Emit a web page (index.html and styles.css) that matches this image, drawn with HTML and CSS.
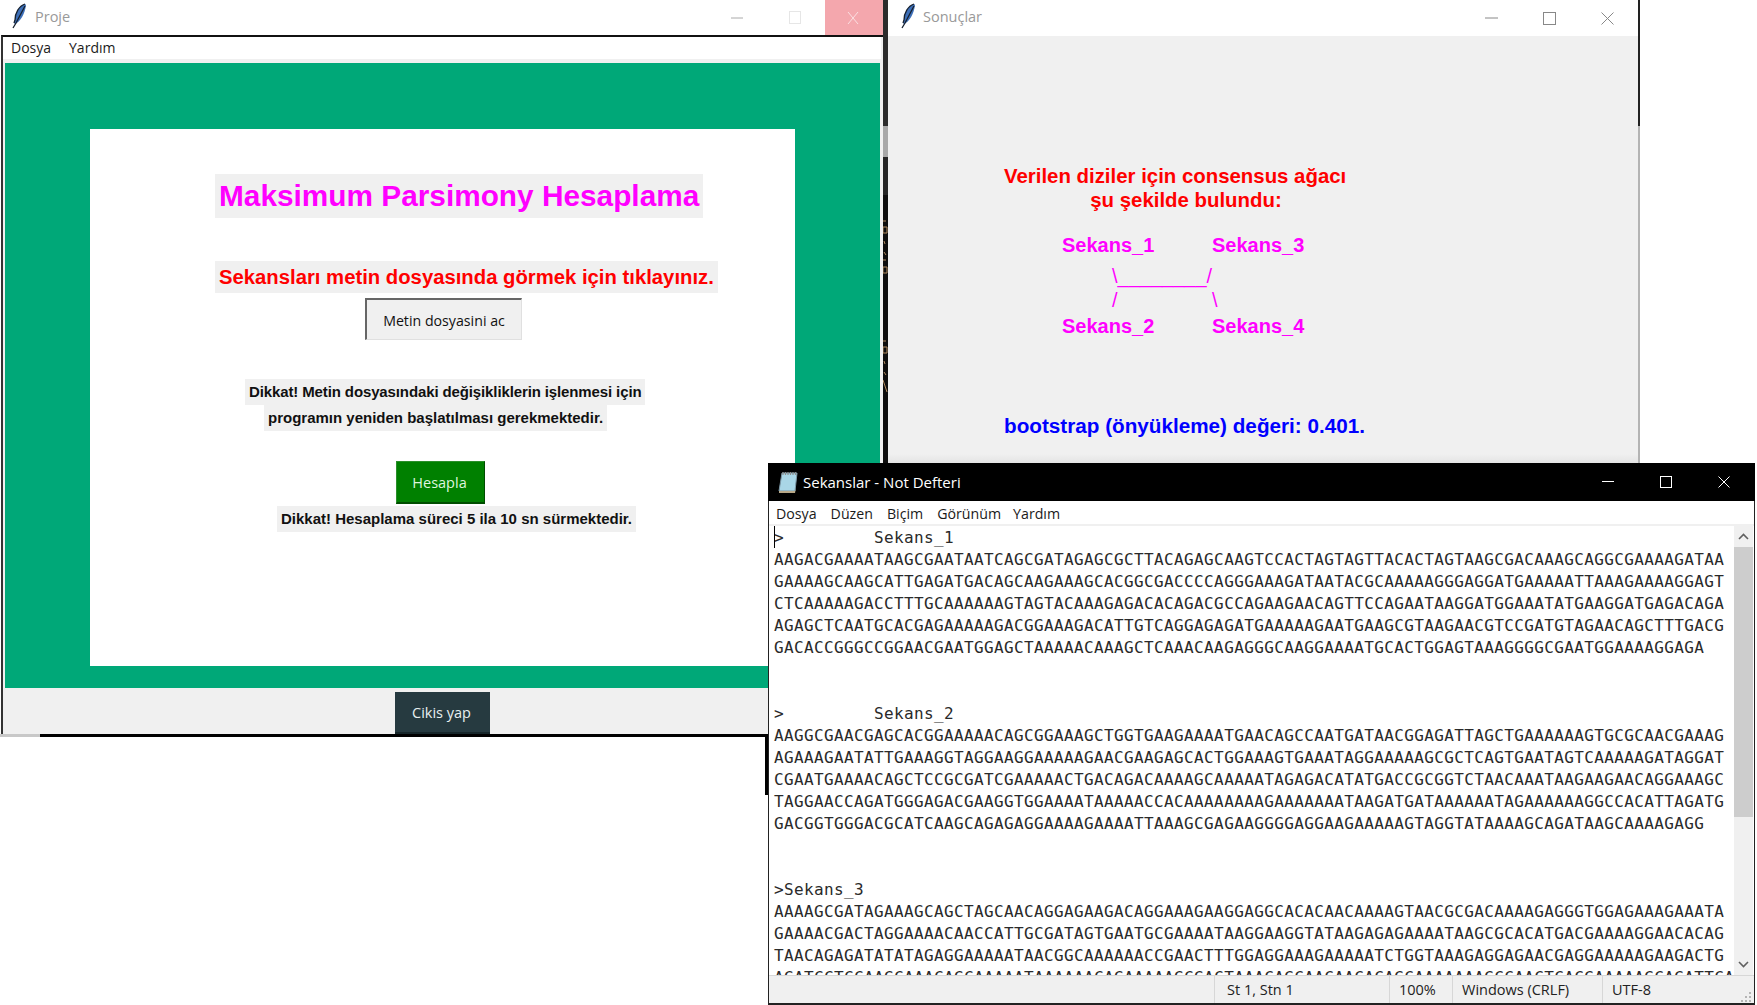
FILE: index.html
```
<!DOCTYPE html>
<html lang="tr">
<head>
<meta charset="utf-8">
<title>Proje</title>
<link rel="stylesheet" href="styles.css">
</head>
<body>
<div class="desktop">
  <div class="gutter">
    <svg class="gutter-marks" width="6" height="190" viewBox="0 0 6 190"><g fill="none" stroke="#b08a60" stroke-width="1"><path d="M1 1h3M1 7h4v6H1zM2 21l1 3M2 32l2 3M1 40h3M1 47h4v6H1z"/><path d="M1 121h3M1 127h4v6H1zM2 141l1 3M2 152l2 3M1 160l4 12"/></g></svg>
  </div>
  <div class="under-line"></div>
  <div class="under-shadow"></div>
  <div class="under-stub"></div>

  <section class="window proje">
    <header class="titlebar">
      <svg class="feather" width="22" height="26" viewBox="0 0 22 26"><path d="M16 1C10 3 6 10 6 17l-1 3 1 1c5-2 10-10 11-19z" fill="#3d6fb8"/><path d="M16 1C10 3 6 10 6 17l-1 3M16 3 7 20l-3 5" fill="none" stroke="#16202e" stroke-width="1.3"/></svg>
      <span class="win-title">Proje</span>
      <div class="caption">
        <span class="cap-btn"><svg width="12" height="12" viewBox="0 0 12 12"><path d="M0 6h12" stroke="#aaa"/></svg></span>
        <span class="cap-btn"><svg width="12" height="13" viewBox="0 0 12 13"><rect x=".5" y=".5" width="11" height="12" fill="none" stroke="#e6e6e6"/></svg></span>
        <span class="cap-btn cap-close"><svg width="12" height="12" viewBox="0 0 12 12"><path d="M1 0l10 12M11 0 1 12" stroke="#fbdfe1" fill="none"/></svg></span>
      </div>
    </header>
    <div class="client">
      <nav class="menu proje-menu"><span>Dosya</span><span>Yardım</span></nav>
      <div class="green">
        <div class="panel">
          <h1 class="lbl heading">Maksimum Parsimony Hesaplama</h1>
          <p class="lbl sub">Sekansları metin dosyasında görmek için tıklayınız.</p>
          <button class="btn open-btn">Metin dosyasini ac</button>
          <p class="lbl note note-1">Dikkat! Metin dosyasındaki değişikliklerin işlenmesi için</p>
          <p class="lbl note note-2">programın yeniden başlatılması gerekmektedir.</p>
          <button class="btn calc-btn">Hesapla</button>
          <p class="lbl note note-3">Dikkat! Hesaplama süreci 5 ila 10 sn sürmektedir.</p>
        </div>
      </div>
      <footer class="proje-foot"><button class="btn exit-btn">Cikis yap</button></footer>
    </div>
  </section>

  <section class="window sonuc">
    <header class="titlebar sonuc-title">
      <svg class="feather" width="22" height="26" viewBox="0 0 22 26"><path d="M16 1C10 3 6 10 6 17l-1 3 1 1c5-2 10-10 11-19z" fill="#3d6fb8"/><path d="M16 1C10 3 6 10 6 17l-1 3M16 3 7 20l-3 5" fill="none" stroke="#16202e" stroke-width="1.3"/></svg>
      <span class="win-title">Sonuçlar</span>
      <div class="caption">
        <span class="cap-btn"><svg width="13" height="12" viewBox="0 0 13 12"><path d="M0 6h13" stroke="#888"/></svg></span>
        <span class="cap-btn"><svg width="13" height="13" viewBox="0 0 13 13"><rect x=".5" y=".5" width="12" height="12" fill="none" stroke="#888"/></svg></span>
        <span class="cap-btn"><svg width="13" height="13" viewBox="0 0 13 13"><path d="M.5.5l12 12M12.500.5l-12 12" stroke="#888" fill="none"/></svg></span>
      </div>
    </header>
    <div class="sonuc-body">
      <p class="result-head">Verilen diziler için consensus ağacı<br><span class="result-second">şu şekilde bulundu:</span></p>
      <div class="tree">
        <div class="tree-row leaves"><span>Sekans_1</span><span>Sekans_3</span></div>
        <div class="tree-row links top-link">\________/</div>
        <div class="tree-row links bottom-link"><span>/</span><span>\</span></div>
        <div class="tree-row leaves"><span>Sekans_2</span><span>Sekans_4</span></div>
      </div>
      <p class="bootstrap">bootstrap (önyükleme) değeri: 0.401.</p>
    </div>
  </section>

  <section class="window notepad">
    <header class="np-title">
      <svg class="np-icon" width="22" height="24" viewBox="0 0 22 24"><path d="M5 3h15l-2 18H2z" fill="#a9d6e6" stroke="#7d98a6"/><path d="M2 21h16l1-3-1 5H2z" fill="#b8a888"/><path d="M6 2v3M8.500 2v3M11 2v3M13.500 2v3M16 2v3M18.500 2v3" stroke="#8d8d8d" stroke-width="1.200"/></svg>
      <span class="np-name">Sekanslar - Not Defteri</span>
      <div class="caption np-caption">
        <span class="cap-btn"><svg width="12" height="12" viewBox="0 0 12 12"><path d="M0 5.500h12" stroke="#fff"/></svg></span>
        <span class="cap-btn"><svg width="12" height="12" viewBox="0 0 12 12"><rect x=".5" y=".5" width="11" height="11" fill="none" stroke="#fff"/></svg></span>
        <span class="cap-btn"><svg width="12" height="12" viewBox="0 0 12 12"><path d="M.5.500l11 11M11.500.500l-11 11" stroke="#fff" fill="none"/></svg></span>
      </div>
    </header>
    <nav class="menu np-menu"><span>Dosya</span><span>Düzen</span><span>Biçim</span><span>Görünüm</span><span>Yardım</span></nav>
    <div class="np-edit">
      <i class="caret"></i>
      <pre class="seq">&gt;         Sekans_1
AAGACGAAAATAAGCGAATAATCAGCGATAGAGCGCTTACAGAGCAAGTCCACTAGTAGTTACACTAGTAAGCGACAAAGCAGGCGAAAAGATAA
GAAAAGCAAGCATTGAGATGACAGCAAGAAAGCACGGCGACCCCAGGGAAAGATAATACGCAAAAAGGGAGGATGAAAAATTAAAGAAAAGGAGT
CTCAAAAAGACCTTTGCAAAAAAGTAGTACAAAGAGACACAGACGCCAGAAGAACAGTTCCAGAATAAGGATGGAAATATGAAGGATGAGACAGA
AGAGCTCAATGCACGAGAAAAAGACGGAAAGACATTGTCAGGAGAGATGAAAAAGAATGAAGCGTAAGAACGTCCGATGTAGAACAGCTTTGACG
GACACCGGGCCGGAACGAATGGAGCTAAAAACAAAGCTCAAACAAGAGGGCAAGGAAAATGCACTGGAGTAAAGGGGCGAATGGAAAAGGAGA


&gt;         Sekans_2
AAGGCGAACGAGCACGGAAAAACAGCGGAAAGCTGGTGAAGAAAATGAACAGCCAATGATAACGGAGATTAGCTGAAAAAAGTGCGCAACGAAAG
AGAAAGAATATTGAAAGGTAGGAAGGAAAAAGAACGAAGAGCACTGGAAAGTGAAATAGGAAAAAGCGCTCAGTGAATAGTCAAAAAGATAGGAT
CGAATGAAAACAGCTCCGCGATCGAAAAACTGACAGACAAAAGCAAAAATAGAGACATATGACCGCGGTCTAACAAATAAGAAGAACAGGAAAGC
TAGGAACCAGATGGGAGACGAAGGTGGAAAATAAAAACCACAAAAAAAAGAAAAAAATAAGATGATAAAAAATAGAAAAAAGGCCACATTAGATG
GACGGTGGGACGCATCAAGCAGAGAGGAAAAGAAAATTAAAGCGAGAAGGGGAGGAAGAAAAAGTAGGTATAAAAGCAGATAAGCAAAAGAGG


&gt;Sekans_3
AAAAGCGATAGAAAGCAGCTAGCAACAGGAGAAGACAGGAAAGAAGGAGGCACACAACAAAAGTAACGCGACAAAAGAGGGTGGAGAAAGAAATA
GAAAACGACTAGGAAAACAACCATTGCGATAGTGAATGCGAAAATAAGGAAGGTATAAGAGAGAAAATAAGCGCACATGACGAAAAGGAACACAG
TAACAGAGATATATAGAGGAAAAATAACGGCAAAAAACCGAACTTTGGAGGAAAGAAAAATCTGGTAAAGAGGAGAACGAGGAAAAAGAAGACTG
AGATCCTCCAAGCAAACAGCAAAAATAAAAAACAGAAAAAGCGACTAAACAGCAACAACACAGCAAAAAAAGCCAACTCACGAAAAAGCAGATTCA</pre>
      <aside class="scrollbar">
        <span class="sb-arrow"><svg width="11" height="7" viewBox="0 0 11 7"><path d="M1 6l4.500-4.500L10 6" fill="none" stroke="#606060" stroke-width="1.600"/></svg></span>
        <span class="sb-thumb"></span>
        <span class="sb-track"></span>
        <span class="sb-arrow"><svg width="11" height="7" viewBox="0 0 11 7"><path d="M1 1l4.500 4.500L10 1" fill="none" stroke="#606060" stroke-width="1.600"/></svg></span>
      </aside>
    </div>
    <footer class="np-status">
      <span class="cell cell-grow"></span>
      <span class="cell cell-pos">St 1, Stn 1</span>
      <span class="cell cell-zoom">100%</span>
      <span class="cell cell-eol">Windows (CRLF)</span>
      <span class="cell cell-enc">UTF-8</span>
      <svg class="grip" width="12" height="12" viewBox="0 0 12 12"><path d="M8 2h2v2H8zM4 6h2v2H4zM8 6h2v2H8zM0 10h2v2H0zM4 10h2v2H4zM8 10h2v2H8z" fill="#b5b5b5"/></svg>
    </footer>
  </section>
</div>
</body>
</html>
```
FILE: styles.css
```
* { box-sizing: border-box; }
html, body { margin: 0; padding: 0; background: #fff; }
body { width: 1757px; height: 1005px; overflow: hidden; font-family: "Open Sans", "Noto Sans", sans-serif; }
p, h1, pre { margin: 0; }
.desktop { position: relative; width: 1757px; height: 1005px; overflow: hidden; background: #fff; }

.gutter { position: absolute; left: 882px; top: 0; width: 6px; height: 463px; background: linear-gradient(to bottom, #2c2c2c 0, #2c2c2c 126px, #a8a8a8 126px, #a8a8a8 157px, #262626 157px, #262626 195px, #0e0e0e 195px); }
.gutter-marks { position: absolute; left: 0; top: 220px; display: block; }
.under-line { position: absolute; left: 40px; top: 734px; width: 728px; height: 3px; background: #000; }
.under-shadow { position: absolute; left: 0; top: 734px; width: 40px; height: 3px; background: #c8c8c8; }
.under-stub { position: absolute; left: 765px; top: 734px; width: 3px; height: 61px; background: #000; }

.window { position: absolute; display: flex; flex-direction: column; }
.titlebar { height: 35px; flex: none; display: flex; align-items: center; background: #fff; padding-left: 9px; }
.feather { display: block; flex: none; margin-top: -4px; }
.win-title { margin: -2px 0 0 4px; font-size: 14.5px; color: #999; font-family: "Open Sans", sans-serif; }
.caption { margin-left: auto; display: flex; height: 100%; }
.cap-btn { width: 58px; display: flex; align-items: center; justify-content: center; padding-right: 3px; }
.cap-close { background: #f4a7ad; }
.menu { display: flex; flex: none; background: #fff; color: #1a1a1a; }

.proje { left: 0; top: 0; width: 883px; height: 734px; background: #fff; }
.client { flex: 1; display: flex; flex-direction: column; margin-left: 1px; border-top: 2px solid #111; border-left: 2px solid #333; background: #f0f0f0; min-height: 0; }
.proje-menu { height: 22px; margin-right: 2px; gap: 18px; padding-left: 8px; font-size: 14px; line-height: 22px; }
.green { height: 625px; flex: none; margin: 4px 3px 0 2px; padding: 66px 85px 22px; background: #00a878; }
.panel { height: 537px; background: #fff; display: flex; flex-direction: column; align-items: flex-start; font-family: "Liberation Sans", Arial, sans-serif; }
.lbl { background: #f0f0f0; font-weight: 700; white-space: nowrap; padding: 0 4px; }
.heading { margin: 45px 0 0 125px; height: 44px; line-height: 44px; font-size: 29.800px; color: #ff00ff; }
.sub { margin: 43px 0 0 125px; height: 32px; line-height: 32px; font-size: 20.300px; color: #ff0000; }
.note { height: 26px; line-height: 26px; font-size: 15px; color: #111; }
.note-1 { margin: 39px 0 0 155px; letter-spacing: -.12px; }
.note-2 { margin: 0 0 0 174px; }
.note-3 { margin: 2px 0 0 187px; }
.btn { display: block; padding: 0; cursor: default; font-family: "Open Sans", sans-serif; font-size: 14.500px; }
.open-btn { margin: 5px 0 0 275px; width: 157px; height: 42px; padding-top: 2px; font-size: 14.200px; background: #f0f0f0; color: #111; border: 1px solid #e0e0e0; border-top: 2px solid #666; border-left: 2px solid #666; }
.calc-btn { margin: 30px 0 0 306px; width: 89px; height: 43px; padding-right: 2px; background: #008000; color: #dff5df; border: 0; border-top: 1px solid #2b8f2b; border-right: 1px solid #004d00; border-bottom: 2px solid #004d00; border-left: 1px solid #2b8f2b; }
.proje-foot { flex: 1; display: flex; align-items: flex-start; padding: 4px 0 0 392px; }
.exit-btn { width: 95px; height: 42px; padding-right: 2px; background: #263a40; color: #e8f0f0; border: 0; border-bottom: 2px solid #16262a; }

.sonuc { left: 888px; top: 0; width: 752px; height: 463px; background: #f0f0f0; }
.sonuc::after { content: ""; position: absolute; right: 0; top: 0; bottom: 0; width: 2px; background: linear-gradient(to bottom, #222 0, #222 126px, #b4b4b4 126px); }
.sonuc-title { height: 36px; padding-left: 10px; padding-right: 2px; }
.sonuc-title .win-title { margin: -3px 0 0 3px; }
.sonuc-body { flex: 1; padding: 129px 0 0 116px; font-family: "Liberation Sans", Arial, sans-serif; font-weight: 700; font-size: 20px; background: linear-gradient(to bottom, #f0f0f0 0, #f0f0f0 418px, #e4e4e4 100%); }
.result-head { width: 342px; text-align: center; font-size: 20.400px; line-height: 23.500px; color: #ff0000; white-space: nowrap; }
.result-second { padding-left: 22px; }
.tree { margin: 20px 0 0 58px; color: #ff00ff; }
.tree-row { display: flex; line-height: 25px; height: 25px; }
.leaves span { width: 150px; }
.leaves { height: 26px; line-height: 26px; }
.links { padding-left: 50px; font-weight: 400; }
.links span { width: 100px; }
.top-link { margin-top: 5.500px; }
.bottom-link { margin-top: -.5px; }
.bootstrap { margin-top: 75px; font-size: 20.700px; color: #0000ff; white-space: nowrap; }

.notepad { left: 768px; top: 463px; width: 987px; height: 542px; background: #fff; border-left: 1px solid #222; border-right: 1px solid #222; border-bottom: 2px solid #222; }
.np-title { height: 38px; flex: none; display: flex; align-items: center; background: #000; padding-left: 9px; margin-left: -1px; margin-right: -1px; }
.np-icon { display: block; flex: none; }
.np-name { margin-left: 4px; color: #fff; font-size: 15px; }
.np-caption { padding-right: 1px; }
.np-menu { gap: 14px; padding: 1px 0 0 7px; font-size: 14.200px; line-height: 23px; border-bottom: 2px solid #f0f0f0; height: 25px; }
.np-menu span:last-child { margin-left: -2px; }
.np-edit { position: relative; flex: 1; display: flex; min-height: 0; overflow: hidden; }
.caret { position: absolute; left: 5px; top: 0; width: 1px; height: 22px; background: #000; }
.seq { flex: 1; min-width: 0; padding: 1px 0 0 5px; overflow: hidden; font-family: "DejaVu Sans Mono", "Liberation Mono", monospace; font-size: 16px; letter-spacing: .37px; line-height: 22px; color: #2a2a2a; white-space: pre; }
.scrollbar { width: 19px; flex: none; margin-right: 1px; display: flex; flex-direction: column; background: #f0f0f0; }
.sb-arrow { height: 21px; flex: none; display: flex; align-items: center; justify-content: center; }
.sb-thumb { height: 270px; flex: none; background: #cdcdcd; }
.sb-track { flex: 1; }
.np-status { position: relative; height: 28px; flex: none; display: flex; background: #f0f0f0; border-top: 1px solid #d7d7d7; font-size: 14.500px; line-height: 28px; color: #222; }
.cell { display: block; border-right: 1px solid #d7d7d7; white-space: nowrap; }
.cell-grow { width: 446px; }
.cell-pos { width: 175px; padding-left: 12px; }
.cell-zoom { width: 63px; padding-left: 9px; }
.cell-eol { width: 150px; padding-left: 9px; }
.cell-enc { border-right: 0; padding-left: 9px; }
.grip { position: absolute; right: 1px; bottom: 1px; display: block; }
```
